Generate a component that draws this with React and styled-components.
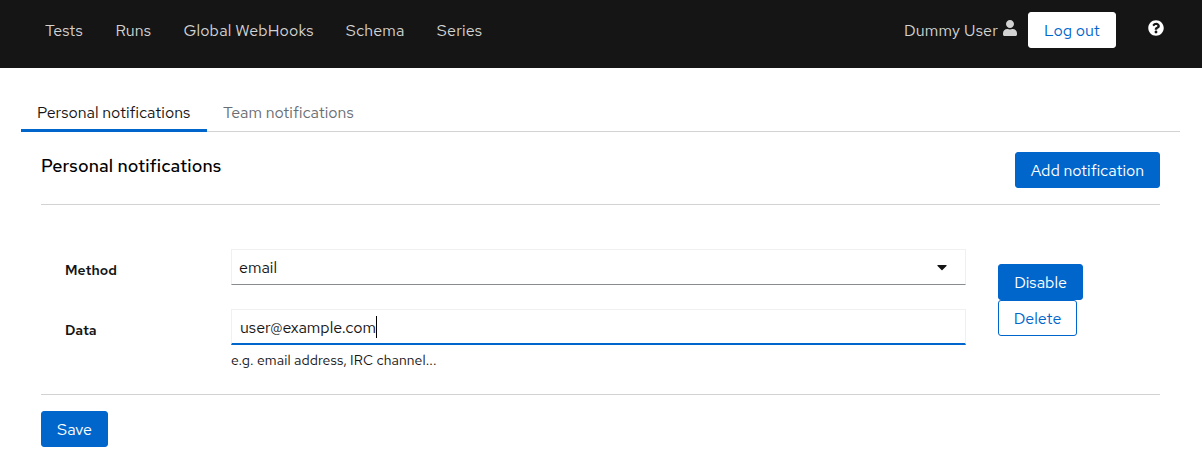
import React from "react";
import styled, { createGlobalStyle } from "styled-components";
import { FaUser, FaQuestionCircle, FaCaretDown } from "react-icons/fa";

const GlobalStyle = createGlobalStyle`
  *, *::before, *::after { box-sizing: border-box; }
  body {
    margin: 0;
    background: #fff;
    color: #151515;
    font: 400 16px/24px "Red Hat Text", Inter, "Liberation Sans", sans-serif;
  }
`;

const Label = styled.span`
  display: block;
  white-space: nowrap;
  letter-spacing: ${(p) => p.$track || 0}px;
`;

const Header = styled.header`
  display: flex;
  height: 68px;
  padding: 12px 38px 0 29px;
  background: #151515;
  color: #d2d2d2;
`;

const Nav = styled.nav`
  display: flex;
  flex: 1;
`;

const NavItem = styled.a`
  width: ${(p) => p.$width}px;
  padding: 7px 0 0 16px;
`;

const User = styled.div`
  display: flex;
  width: 124px;
  padding-top: 7px;
  svg { margin: 1px 11px 0 auto; width: 14px; height: 16px; }
`;

const Help = styled.div`
  margin: 8px 0 0 32px;
  color: #fff;
  svg { display: block; width: 16px; height: 16px; }
`;

const Button = styled.button`
  display: flex;
  justify-content: center;
  width: ${(p) => p.$width}px;
  height: 36px;
  padding: 6px 0 4px;
  border: 1px solid ${(p) => (p.$kind === "plain" ? "#fff" : "#06c")};
  border-radius: 3px;
  background: ${(p) => (p.$kind ? "#fff" : "#06c")};
  color: ${(p) => (p.$kind ? "#06c" : "#fff")};
  font: inherit;
`;

const Main = styled.main`
  padding: 24px 22px 0 21px;
`;

const Tabs = styled.div`
  display: flex;
  height: 40px;
  border-bottom: 1px solid #d2d2d2;
`;

const Tab = styled.div`
  width: ${(p) => p.$width}px;
  height: 40px;
  padding: 9px 0 0 16px;
  color: ${(p) => (p.$active ? "#151515" : "#6a6e73")};
  border-bottom: ${(p) => (p.$active ? "3px solid #06c" : "0")};
`;

const Panel = styled.section`
  padding: 20px 20px 0;
`;

const PanelHeader = styled.div`
  display: flex;
  justify-content: space-between;
  height: 53px;
  border-bottom: 1px solid #d2d2d2;
`;

const Title = styled.h2`
  margin: 2px 0 0;
  color: #000;
  font-size: 18px;
  font-weight: 500;
  line-height: 24px;
`;

const Entry = styled.div`
  display: flex;
  height: 190px;
  padding: 44px 0 0 24px;
  border-bottom: 1px solid #d2d2d2;
`;

const Fields = styled.div`
  display: grid;
  grid-template-columns: 166px 735px;
  grid-auto-rows: 36px;
  row-gap: 24px;
`;

const FieldName = styled.label`
  padding-top: 11px;
  font-size: 14px;
  font-weight: 600;
  line-height: 21px;
`;

const Control = styled.div`
  display: flex;
  justify-content: space-between;
  height: 36px;
  padding: 6px ${(p) => (p.$focused ? 8 : 18)}px 0 ${(p) => (p.$focused ? 8 : 7)}px;
  border: 1px solid #f0f0f0;
  border-bottom: ${(p) => (p.$focused ? "2px solid #06c" : "1px solid #8a8d90")};
  svg { width: 10px; height: 16px; margin-top: 3px; }
`;

const Value = styled.div`
  display: flex;
`;

const Caret = styled.span`
  width: 1px;
  height: 22px;
  background: #000;
`;

const Hint = styled.div`
  padding-top: 5px;
  font-size: 14px;
  line-height: 21px;
`;

const Actions = styled.div`
  padding: 15px 0 0 32px;
`;

const Footer = styled.div`
  padding-top: 16px;
`;

export default function App() {
  return (
    <>
      <GlobalStyle />
      <Header>
        <Nav>
          <NavItem $width={70.5}><Label>Tests</Label></NavItem>
          <NavItem $width={68}><Label $track={0.1}>Runs</Label></NavItem>
          <NavItem $width={162.3}><Label $track={0.15}>Global WebHooks</Label></NavItem>
          <NavItem $width={91}><Label $track={0.12}>Schema</Label></NavItem>
          <NavItem $width={80}><Label $track={0.16}>Series</Label></NavItem>
        </Nav>
        <User><Label $track={0.16}>Dummy User</Label><FaUser /></User>
        <Button $kind="plain" $width={88}><Label>Log out</Label></Button>
        <Help><FaQuestionCircle /></Help>
      </Header>
      <Main>
        <Tabs>
          <Tab $active $width={186}><Label>Personal notifications</Label></Tab>
          <Tab $width={163}><Label>Team notifications</Label></Tab>
        </Tabs>
        <Panel>
          <PanelHeader>
            <Title><Label $track={0.1}>Personal notifications</Label></Title>
            <Button $width={145}><Label>Add notification</Label></Button>
          </PanelHeader>
          <Entry>
            <Fields>
              <FieldName><Label>Method</Label></FieldName>
              <Control><Label>email</Label><FaCaretDown /></Control>
              <FieldName><Label>Data</Label></FieldName>
              <div>
                <Control $focused>
                  <Value><Label>user@example.com</Label><Caret /></Value>
                </Control>
                <Hint><Label $track={0.09}>e.g. email address, IRC channel...</Label></Hint>
              </div>
            </Fields>
            <Actions>
              <Button $width={85}><Label>Disable</Label></Button>
              <Button $kind="outline" $width={79}><Label>Delete</Label></Button>
            </Actions>
          </Entry>
          <Footer>
            <Button $width={67}><Label>Save</Label></Button>
          </Footer>
        </Panel>
      </Main>
    </>
  );
}
